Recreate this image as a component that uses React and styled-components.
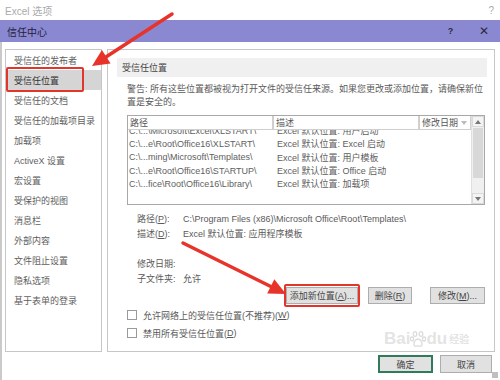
import styled, { createGlobalStyle } from 'styled-components'

const GlobalStyle = createGlobalStyle`
  html, body {
    margin: 0;
    padding: 0;
    background: #fff;
  }
  body {
    font-family: "Liberation Sans", "Noto Sans CJK SC", sans-serif;
    font-size: 9px;
    color: #555;
  }
  * { box-sizing: border-box; }
`

const Page = styled.div`
  position: relative;
  width: 500px;
  height: 380px;
  overflow: hidden;
  display: flex;
  flex-direction: column;
  background: #fff;
`

const TopBar = styled.div`
  height: 20px;
  display: flex;
  align-items: center;
  justify-content: space-between;
  padding: 0 6px 0 5px;
  color: #aaa;
  font-size: 10px;
`

const TitleBar = styled.div`
  height: 22px;
  display: flex;
  align-items: center;
  padding-left: 7px;
  background: #8b88d2;
  color: #23233a;
  font-size: 10px;
`

const TitleButtons = styled.div`
  margin-left: auto;
  display: flex;
  height: 100%;
`

const TitleButton = styled.div`
  width: 33px;
  display: flex;
  align-items: center;
  justify-content: center;
  font-size: ${p => p.$big ? '12px' : '9px'};
  font-weight: ${p => p.$big ? 400 : 700};
  color: #2a2a40;
`

const Body = styled.div`
  flex: 1;
  border-left: 2px solid #cacaca;
  padding: 7px 5px 0 3px;
  display: flex;
  flex-direction: column;
`

const Panels = styled.div`
  display: flex;
  gap: 5px;
  height: 303px;
`

const NavPanel = styled.div`
  width: 97px;
  border: 1px solid #c6c6c6;
  display: flex;
  flex-direction: column;
`

const NavItem = styled.div`
  position: relative;
  height: 20px;
  display: flex;
  align-items: center;
  padding-left: 8px;
  white-space: nowrap;
  color: ${p => p.$active ? '#333' : '#5e5e5e'};
  background: ${p => p.$active ? '#d5d5d5' : 'transparent'};
  ${p => p.$active && `
    &::after {
      content: '';
      position: absolute;
      left: 0;
      top: -3px;
      bottom: -2px;
      width: 74px;
      border: 2px solid #e2352b;
      border-radius: 2px;
    }
  `}
`

const MainPanel = styled.div`
  width: 388px;
  border: 1px solid #c6c6c6;
  padding: 8px 7px 0 9px;
  display: flex;
  flex-direction: column;
`

const SectionHeader = styled.div`
  height: 19px;
  display: flex;
  align-items: center;
  padding-left: 5px;
  background: #f0f0f0;
  color: #444;
`

const Content = styled.div`
  padding: 0 2px 0 10px;
  display: flex;
  flex-direction: column;
`

const Warning = styled.div`
  margin-top: 6px;
  line-height: 13px;
  white-space: nowrap;
  color: #5a5a5a;
`

const Table = styled.div`
  margin-top: 6px;
  height: 90px;
  border: 1px solid #a8a8a8;
  display: flex;
`

const TableMain = styled.div`
  flex: 1;
  display: flex;
  flex-direction: column;
  min-width: 0;
`

const HeaderRow = styled.div`
  display: grid;
  grid-template-columns: 145px 146px 1fr;
  height: 14px;
`

const HeaderCell = styled.div`
  display: flex;
  align-items: center;
  justify-content: space-between;
  padding: 0 3px 0 2px;
  border: 1px solid #cfcfcf;
  border-top: none;
  border-left: ${p => p.$first ? 'none' : '1px solid #cfcfcf'};
  color: #555;
`

const Viewport = styled.div`
  flex: 1;
  overflow: hidden;
`

const Rows = styled.div`
  margin-top: -6px;
`

const Row = styled.div`
  display: grid;
  grid-template-columns: 147px 1fr;
  height: 13.3px;
  align-items: center;
  white-space: nowrap;
  color: #606060;
`

const Cell = styled.div`
  padding-left: ${p => p.$pad}px;
  overflow: hidden;
`

const Scrollbar = styled.div`
  width: 13px;
  border-left: 1px solid #e0e0e0;
  background: #f0f0f0;
  display: flex;
  flex-direction: column;
`

const ScrollArrow = styled.div`
  height: 11px;
  display: flex;
  align-items: center;
  justify-content: center;
  background: #f4f4f4;
  border: 1px solid #dadada;
`

const ScrollThumb = styled.div`
  height: 50px;
  margin: 1px 1px 0 1px;
  background: #d8d8d8;
`

const Spacer = styled.div`
  flex: 1;
`

const Details = styled.div`
  margin-top: 6px;
  padding-left: 10px;
  display: grid;
  grid-template-columns: 46px 1fr;
  grid-auto-rows: 15px;
  align-items: center;
  white-space: nowrap;
  color: #5a5a5a;
`

const Gap = styled.div`
  grid-column: 1 / 3;
  height: 13px;
`

const ButtonRow = styled.div`
  margin-top: 1px;
  display: flex;
  justify-content: flex-end;
  gap: 10px;
`

const Button = styled.div`
  position: relative;
  width: ${p => p.$w}px;
  height: ${p => p.$h || 17}px;
  margin-left: ${p => p.$ml || 0}px;
  display: flex;
  align-items: center;
  justify-content: center;
  background: #e1e1e1;
  border: ${p => p.$primary ? '2px solid #2f7b5c' : '1px solid #adadad'};
  color: #444;
  white-space: nowrap;
  ${p => p.$marked && `
    &::after {
      content: '';
      position: absolute;
      left: -3px;
      right: -3px;
      top: -4px;
      bottom: -4px;
      border: 2px solid #e2352b;
      border-radius: 2px;
    }
  `}
`

const CheckRow = styled.label`
  height: 18px;
  display: flex;
  align-items: center;
  color: #5a5a5a;
  white-space: nowrap;
  margin-top: ${p => p.$first ? 2 : 0}px;
`

const Box = styled.span`
  width: 10px;
  height: 10px;
  margin-right: 6px;
  border: 1px solid #9a9a9a;
  background: #fff;
`

const Footer = styled.div`
  margin-top: 3px;
  display: flex;
  justify-content: flex-end;
  gap: 7px;
  padding-right: 3px;
`

const Watermark = styled.div`
  position: absolute;
  left: 384px;
  top: 329px;
  display: flex;
  align-items: flex-end;
  color: rgba(185, 185, 185, 0.4);
  font-family: "Liberation Sans", sans-serif;
  font-weight: 700;
  font-size: 17px;
  pointer-events: none;
`

const WatermarkSmall = styled.span`
  font-family: "Noto Sans CJK SC", sans-serif;
  font-size: 10px;
  margin: 0 0 3px 2px;
`

const Overlay = styled.svg`
  position: absolute;
  left: 0;
  top: 0;
  pointer-events: none;
`

const Grip = styled.div`
  position: absolute;
  right: 2px;
  bottom: 2px;
  width: 6px;
  height: 6px;
  background: radial-gradient(circle, #bbb 0.7px, transparent 0.8px) 0 0 / 2px 2px;
`

const navItems = [
  '受信任的发布者', '受信任位置', '受信任的文档', '受信任的加载项目录', '加载项',
  'ActiveX 设置', '宏设置', '受保护的视图', '消息栏', '外部内容',
  '文件阻止设置', '隐私选项', '基于表单的登录',
]

const locations = [
  ['C:\\...\\Microsoft\\Excel\\XLSTART\\', 'Excel 默认位置: 用户启动'],
  ['C:\\...e\\Root\\Office16\\XLSTART\\', 'Excel 默认位置: Excel 启动'],
  ['C:\\...ming\\Microsoft\\Templates\\', 'Excel 默认位置: 用户模板'],
  ['C:\\...e\\Root\\Office16\\STARTUP\\', 'Excel 默认位置: Office 启动'],
  ['C:\\...fice\\Root\\Office16\\Library\\', 'Excel 默认位置: 加载项'],
]

function Tri({ down, color = '#777' }) {
  return (
    <svg width="6" height="4" viewBox="0 0 6 4">
      <path d={down ? 'M0 0 L6 0 L3 4 Z' : 'M0 4 L6 4 L3 0 Z'} fill={color} />
    </svg>
  )
}

function Paw() {
  return (
    <svg width="16" height="17" viewBox="0 0 16 17" style={{ marginBottom: 1 }}>
      <g fill="none" stroke="rgba(185,185,185,0.5)" strokeWidth="1.3">
        <ellipse cx="5" cy="3" rx="1.8" ry="2.3" />
        <ellipse cx="11" cy="3" rx="1.8" ry="2.3" />
        <ellipse cx="2" cy="8" rx="1.6" ry="2" />
        <ellipse cx="14" cy="8" rx="1.6" ry="2" />
        <path d="M8 8 C5 8 3.5 12 4 14 C4.5 16 7 15 8 15 C9 15 11.5 16 12 14 C12.5 12 11 8 8 8 Z" />
      </g>
    </svg>
  )
}

function Arrow({ from, base, head }) {
  return (
    <g>
      <line x1={from[0]} y1={from[1]} x2={base[0]} y2={base[1]} stroke="#e8332a" strokeWidth="3.5" strokeLinecap="round" />
      <polygon points={head.map(p => p.join(',')).join(' ')} fill="#e8332a" />
    </g>
  )
}

export default function App() {
  return (
    <Page>
      <GlobalStyle />
      <TopBar>
        <span>Excel 选项</span>
        <span>?</span>
      </TopBar>
      <TitleBar>
        信任中心
        <TitleButtons>
          <TitleButton>?</TitleButton>
          <TitleButton $big>✕</TitleButton>
        </TitleButtons>
      </TitleBar>
      <Body>
        <Panels>
          <NavPanel>
            {navItems.map((item, i) => (
              <NavItem key={item} $active={i === 1}>{item}</NavItem>
            ))}
          </NavPanel>
          <MainPanel>
            <SectionHeader>受信任位置</SectionHeader>
            <Content>
              <Warning>
                警告: 所有这些位置都被视为打开文件的受信任来源。如果您更改或添加位置，请确保新位<br />
                置是安全的。
              </Warning>
              <Table>
                <TableMain>
                  <HeaderRow>
                    <HeaderCell $first>路径</HeaderCell>
                    <HeaderCell>描述</HeaderCell>
                    <HeaderCell>修改日期 <Tri down color="#bbb" /></HeaderCell>
                  </HeaderRow>
                  <Viewport>
                    <Rows>
                      {locations.map(([path, desc]) => (
                        <Row key={path}>
                          <Cell $pad={1}>{path}</Cell>
                          <Cell $pad={2}>{desc}</Cell>
                        </Row>
                      ))}
                    </Rows>
                  </Viewport>
                </TableMain>
                <Scrollbar>
                  <ScrollArrow><Tri /></ScrollArrow>
                  <ScrollThumb />
                  <Spacer />
                  <ScrollArrow><Tri down /></ScrollArrow>
                </Scrollbar>
              </Table>
              <Details>
                <span>路径(<u>P</u>):</span>
                <span>C:\Program Files (x86)\Microsoft Office\Root\Templates\</span>
                <span>描述(<u>D</u>):</span>
                <span>Excel 默认位置: 应用程序模板</span>
                <Gap />
                <span>修改日期:</span>
                <span />
                <span>子文件夹:</span>
                <span>允许</span>
              </Details>
              <ButtonRow>
                <Button $w={72} $marked>添加新位置(<u>A</u>)...</Button>
                <Button $w={44}>删除(<u>R</u>)</Button>
                <Button $w={55} $ml={8}>修改(<u>M</u>)...</Button>
              </ButtonRow>
              <CheckRow $first><Box />允许网络上的受信任位置(不推荐)(<u>W</u>)</CheckRow>
              <CheckRow><Box />禁用所有受信任位置(<u>D</u>)</CheckRow>
            </Content>
          </MainPanel>
        </Panels>
        <Footer>
          <Button $w={55} $h={18} $primary>确定</Button>
          <Button $w={52} $h={18}>取消</Button>
        </Footer>
      </Body>
      <Watermark>
        Bai<Paw />du<WatermarkSmall>经验</WatermarkSmall>
      </Watermark>
      <Grip />
      <Overlay width="500" height="380" viewBox="0 0 500 380">
        <Arrow
          from={[172, 14]}
          base={[106.3, 56.7]}
          head={[[92, 66], [110.6, 63.4], [101.9, 50]]}
        />
        <Arrow
          from={[183, 243]}
          base={[270.8, 286.5]}
          head={[[286, 294], [267.2, 293.6], [274.3, 279.3]]}
        />
      </Overlay>
    </Page>
  )
}
